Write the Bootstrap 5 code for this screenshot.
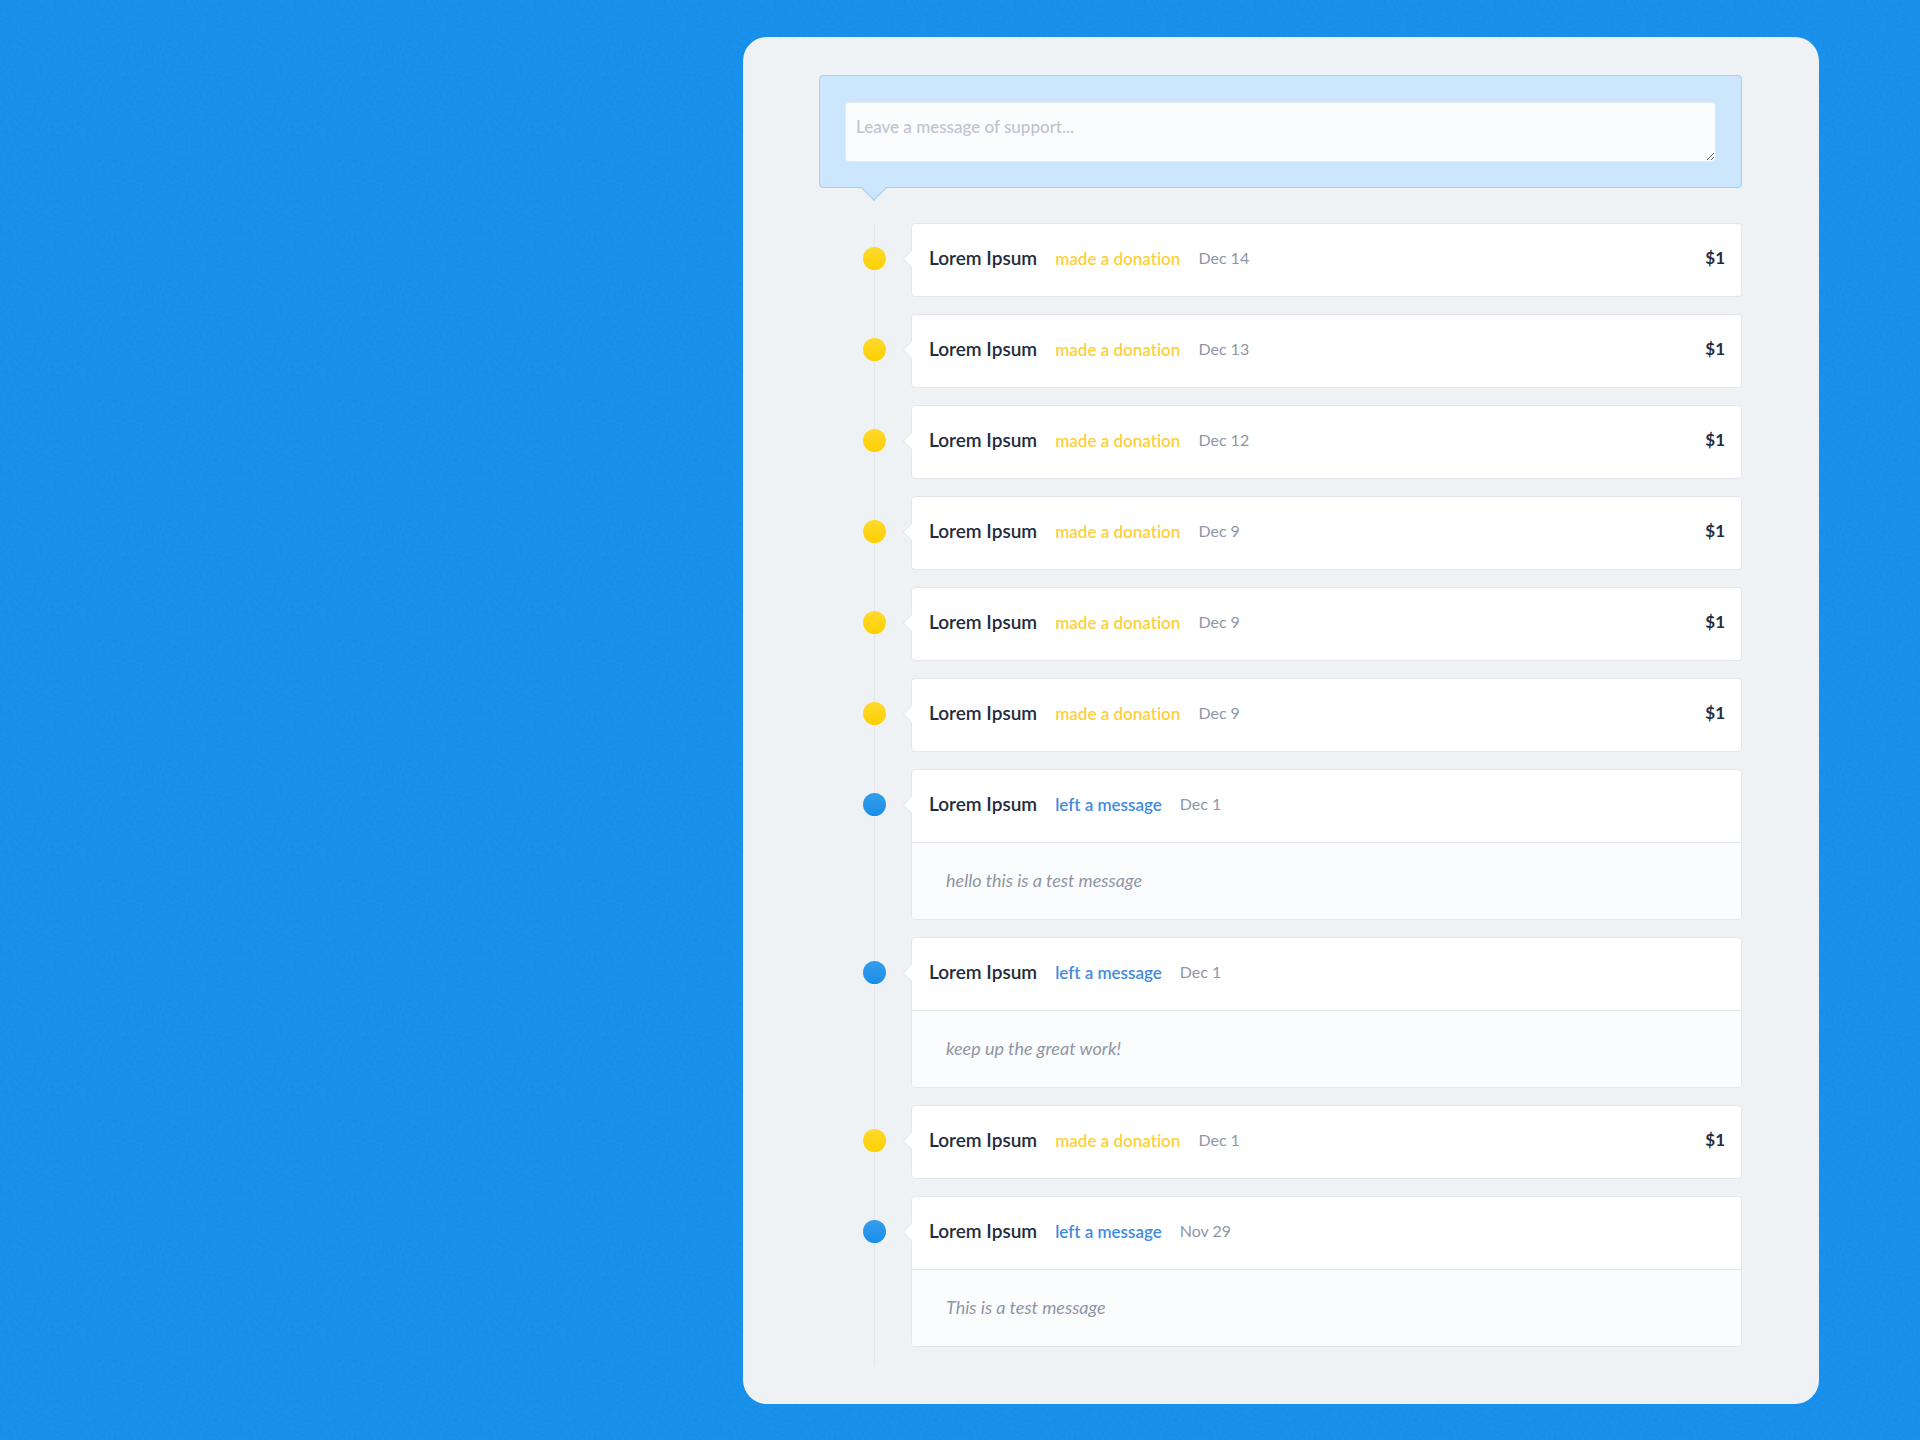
<!DOCTYPE html>
<html lang="en">
<head>
<meta charset="utf-8">
<meta name="viewport" content="width=device-width, initial-scale=1">
<title>Supporters</title>
<link href="https://cdn.jsdelivr.net/npm/bootstrap@5.3.0/dist/css/bootstrap.min.css" rel="stylesheet">
<style>
  body {
    font-family: Lato, "Open Sans", sans-serif;
    font-size: 17px;
    line-height: 24px;
    font-variant-ligatures: none;
    color: #232c3d;
    background-color: #1a91ed;
    background-image: url("data:image/svg+xml,%3Csvg xmlns='http://www.w3.org/2000/svg' width='240' height='240'%3E%3Cfilter id='n' x='0' y='0' width='1' height='1'%3E%3CfeTurbulence type='fractalNoise' baseFrequency='.35' numOctaves='3' stitchTiles='stitch'/%3E%3CfeColorMatrix values='0 0 0 0 0 0 0 0 0 .2 0 0 0 0 .5 1.6 0 0 0 -.6'/%3E%3C/filter%3E%3Crect width='240' height='240' filter='url(%23n)' opacity='.25'/%3E%3C/svg%3E");
  }
  .page-wrap { padding: 37px 101px 36px; }
  .feed-panel { max-width: 1076px; padding: 38px 77px 38px 76px; border-radius: 24px; background: #eef2f5; }
  .composer { padding: 26px 25px 25px; background: #cce7fd; border: 1px solid #9fcff3; border-radius: 4px; margin-bottom: 35px; }
  .composer::after {
    content: ""; position: absolute; left: 45px; bottom: -10px; width: 18px; height: 18px;
    background: #cce7fd; border: solid #9fcff3; border-width: 0 1px 1px 0; transform: rotate(45deg);
  }
  .composer textarea {
    height: 60px; min-height: 60px; padding: 12px 10px; font-size: 17px; line-height: 24px; font-weight: 500;
    background: #fbfcfe; border: 1px solid #e2e8f0; border-radius: 4px;
  }
  .composer textarea::placeholder { color: #bfc4cf; }
  .timeline::before { content: ""; position: absolute; left: 55px; top: 0; bottom: 0; width: 1px; background: #e3e7ec; }
  .entry { padding-bottom: 17px; }
  .entry:last-child { padding-bottom: 19px; }
  .entry-side { width: 92px; padding: 24px 0 0 44px; }
  .dot { width: 23px; height: 23px; }
  .dot-gold { background: linear-gradient(#ffd92e, #fdd000); }
  .dot-blue { background: linear-gradient(#359eec, #1a8ee8); }
  .entry-card { background: #fff; border: 1px solid #e3e7ed; border-radius: 4px; }
  .entry-card::before {
    content: ""; position: absolute; left: -7px; top: 29px; width: 12px; height: 12px;
    background: #fff; border: solid #e3e7ed; border-width: 0 0 1px 1px; transform: rotate(45deg);
  }
  .entry-head { height: 72px; padding: 0 16px 4px 17px; gap: 18px; }
  .entry-name { font-size: 19px; font-weight: 600; }
  .entry-sum { font-size: 17px; font-weight: 700; }
  .entry-act { font-weight: 600; padding-top: 2px; }
  .act-gold { color: #fdd03a; }
  .act-blue { color: #3f8be0; }
  .entry-date, .entry-text { color: #8f96a5; }
  .entry-date { font-size: 16px; }
  .entry-text { padding: 25px 34px 27px; font-size: 18px; font-style: italic; background: #fbfcfe; border-top: 1px solid #e3e7ed; border-radius: 0 0 3px 3px; }
</style>
<script src="https://cdn.jsdelivr.net/npm/bootstrap@5.3.0/dist/js/bootstrap.bundle.min.js"></script>
</head>
<body>
<main class="page-wrap">
  <section class="feed-panel w-100 ms-auto">
    <form class="composer position-relative">
      <textarea class="form-control d-block" aria-label="Leave a message of support" placeholder="Leave a message of support..."></textarea>
    </form>
    <ol class="timeline list-unstyled position-relative m-0">
      <li class="entry d-flex"><div class="entry-side flex-shrink-0"><div class="dot dot-gold rounded-circle position-relative"></div></div>
        <article class="entry-card position-relative flex-grow-1"><div class="entry-head d-flex align-items-center"><strong class="entry-name">Lorem Ipsum</strong><span class="entry-act act-gold">made a donation</span><time class="entry-date">Dec 14</time><span class="entry-sum ms-auto">$1</span></div></article></li>
      <li class="entry d-flex"><div class="entry-side flex-shrink-0"><div class="dot dot-gold rounded-circle position-relative"></div></div>
        <article class="entry-card position-relative flex-grow-1"><div class="entry-head d-flex align-items-center"><strong class="entry-name">Lorem Ipsum</strong><span class="entry-act act-gold">made a donation</span><time class="entry-date">Dec 13</time><span class="entry-sum ms-auto">$1</span></div></article></li>
      <li class="entry d-flex"><div class="entry-side flex-shrink-0"><div class="dot dot-gold rounded-circle position-relative"></div></div>
        <article class="entry-card position-relative flex-grow-1"><div class="entry-head d-flex align-items-center"><strong class="entry-name">Lorem Ipsum</strong><span class="entry-act act-gold">made a donation</span><time class="entry-date">Dec 12</time><span class="entry-sum ms-auto">$1</span></div></article></li>
      <li class="entry d-flex"><div class="entry-side flex-shrink-0"><div class="dot dot-gold rounded-circle position-relative"></div></div>
        <article class="entry-card position-relative flex-grow-1"><div class="entry-head d-flex align-items-center"><strong class="entry-name">Lorem Ipsum</strong><span class="entry-act act-gold">made a donation</span><time class="entry-date">Dec 9</time><span class="entry-sum ms-auto">$1</span></div></article></li>
      <li class="entry d-flex"><div class="entry-side flex-shrink-0"><div class="dot dot-gold rounded-circle position-relative"></div></div>
        <article class="entry-card position-relative flex-grow-1"><div class="entry-head d-flex align-items-center"><strong class="entry-name">Lorem Ipsum</strong><span class="entry-act act-gold">made a donation</span><time class="entry-date">Dec 9</time><span class="entry-sum ms-auto">$1</span></div></article></li>
      <li class="entry d-flex"><div class="entry-side flex-shrink-0"><div class="dot dot-gold rounded-circle position-relative"></div></div>
        <article class="entry-card position-relative flex-grow-1"><div class="entry-head d-flex align-items-center"><strong class="entry-name">Lorem Ipsum</strong><span class="entry-act act-gold">made a donation</span><time class="entry-date">Dec 9</time><span class="entry-sum ms-auto">$1</span></div></article></li>
      <li class="entry d-flex"><div class="entry-side flex-shrink-0"><div class="dot dot-blue rounded-circle position-relative"></div></div>
        <article class="entry-card position-relative flex-grow-1"><div class="entry-head d-flex align-items-center"><strong class="entry-name">Lorem Ipsum</strong><span class="entry-act act-blue">left a message</span><time class="entry-date">Dec 1</time></div><p class="entry-text m-0">hello this is a test message</p></article></li>
      <li class="entry d-flex"><div class="entry-side flex-shrink-0"><div class="dot dot-blue rounded-circle position-relative"></div></div>
        <article class="entry-card position-relative flex-grow-1"><div class="entry-head d-flex align-items-center"><strong class="entry-name">Lorem Ipsum</strong><span class="entry-act act-blue">left a message</span><time class="entry-date">Dec 1</time></div><p class="entry-text m-0">keep up the great work!</p></article></li>
      <li class="entry d-flex"><div class="entry-side flex-shrink-0"><div class="dot dot-gold rounded-circle position-relative"></div></div>
        <article class="entry-card position-relative flex-grow-1"><div class="entry-head d-flex align-items-center"><strong class="entry-name">Lorem Ipsum</strong><span class="entry-act act-gold">made a donation</span><time class="entry-date">Dec 1</time><span class="entry-sum ms-auto">$1</span></div></article></li>
      <li class="entry d-flex"><div class="entry-side flex-shrink-0"><div class="dot dot-blue rounded-circle position-relative"></div></div>
        <article class="entry-card position-relative flex-grow-1"><div class="entry-head d-flex align-items-center"><strong class="entry-name">Lorem Ipsum</strong><span class="entry-act act-blue">left a message</span><time class="entry-date">Nov 29</time></div><p class="entry-text m-0">This is a test message</p></article></li>
    </ol>
  </section>
</main>
</body>
</html>
